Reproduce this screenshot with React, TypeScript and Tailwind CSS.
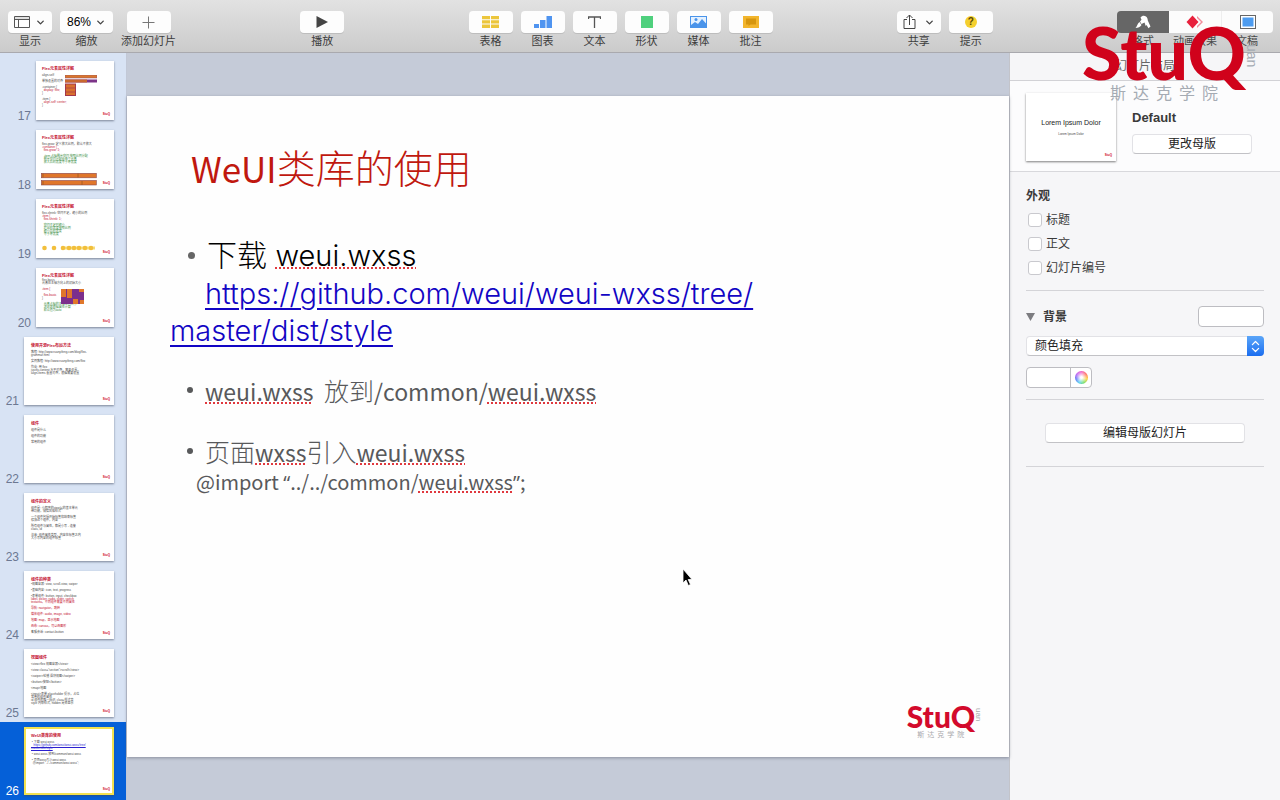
import React from "react";
import { ChevronDown, ChevronsUpDown } from "lucide-react";

type Line = { text: string; tone?: string; gap?: boolean };
type Thumb = { id: number; title: string; nested?: boolean; lines: Line[]; art?: "bars" | "wide" | "dots" | "blocks" };

const RED = "text-[#c41230]";
const GREEN = "text-[#3c8f45]";
const BLUE = "text-[#2a1fd0] underline";

const thumbs: Thumb[] = [
  {
    id: 17,
    title: "Flex元素属性详解",
    nested: true,
    art: "bars",
    lines: [
      { text: "align-self", gap: true },
      { text: "单独设置的对齐", gap: true },
      { text: ".container {", gap: true },
      { text: "  display: flex;", tone: RED },
      { text: "}" },
      { text: ".item {", gap: true },
      { text: "  align-self: center;", tone: RED },
      { text: "}" },
    ],
  },
  {
    id: 18,
    title: "Flex元素属性详解",
    nested: true,
    art: "wide",
    lines: [
      { text: "flex-grow: 定义放大比例，默认不放大", gap: true },
      { text: ".container {", tone: RED },
      { text: "  flex-grow: 1;", tone: RED },
      { text: "  .item 占据剩余空间 按照比例分配", tone: GREEN, gap: true },
      { text: "  剩余空间分配给每个元素", tone: GREEN },
      { text: "  放大后的宽度等于原宽度", tone: GREEN },
    ],
  },
  {
    id: 19,
    title: "Flex元素属性详解",
    nested: true,
    art: "dots",
    lines: [
      { text: "flex-shrink: 空间不足，缩小的比例", gap: true },
      { text: ".item {", tone: RED },
      { text: "  flex-shrink: 1;", tone: RED },
      { text: "  空间不足时缩小", tone: GREEN, gap: true },
      { text: "  超出的宽度按照比例", tone: GREEN },
      { text: "  缩小后的宽度", tone: GREEN },
      { text: "  等于原宽度", tone: GREEN },
    ],
  },
  {
    id: 20,
    title: "Flex元素属性详解",
    nested: true,
    art: "blocks",
    lines: [
      { text: "flex-basis" },
      { text: "元素在主轴方向上的初始大小" },
      { text: ".item {", tone: RED, gap: true },
      { text: "  flex-basis", tone: RED, gap: true },
      { text: "}" },
      { text: "  元素占据的主轴空间大小", tone: GREEN, gap: true },
      { text: "  浏览器根据属性计算", tone: GREEN },
      { text: "  默认值为auto", tone: GREEN },
    ],
  },
  {
    id: 21,
    title: "使用开源Flex布局方法",
    lines: [
      { text: "教程: http://www.ruanyifeng.com/blog/flex-", gap: true },
      { text: "grammar.html" },
      { text: "实例教程: http://www.ruanyifeng.com/flex", gap: true },
      { text: "作业: 用 flex", gap: true },
      { text: "justify-content 水平对齐，需要设置" },
      { text: "align-items 垂直对齐，根据需要设置" },
    ],
  },
  {
    id: 22,
    title: "组件",
    lines: [
      { text: "组件是什么", gap: true },
      { text: "组件的功能", gap: true },
      { text: "常用的组件", gap: true },
    ],
  },
  {
    id: 23,
    title: "组件的定义",
    lines: [
      { text: "组件是: 小程序的view层的基本单元", gap: true },
      { text: "带功能，微信风格样式" },
      { text: "一个组件包括开始标签和结束标签", gap: true },
      { text: "修饰这个组件，内容" },
      { text: "所有组件与属性，都是小写 - 连接", gap: true },
      { text: "class, id" },
      { text: "注意: 组件属性类型，内容在标签之内", gap: true },
      { text: "大小写内容的组件标签" },
    ],
  },
  {
    id: 24,
    title: "组件的种类",
    lines: [
      { text: "•视图容器: view, scroll-view, swiper" },
      { text: "•基础内容: icon, text, progress", gap: true },
      { text: "•表单组件: button, input, checkbox", gap: true },
      { text: "label, picker, radio, slider, switch", tone: RED },
      { text: "textarea，不同组件需要不同属性", tone: RED },
      { text: "导航: navigator，跳转", tone: RED, gap: true },
      { text: "媒体组件: audio, image, video", tone: RED, gap: true },
      { text: "地图: map，显示地图", tone: RED, gap: true },
      { text: "画布: canvas，可以画图形", tone: RED, gap: true },
      { text: "客服会话: contact-button", gap: true },
    ],
  },
  {
    id: 25,
    title: "视图组件",
    lines: [
      { text: "<view>flex 视图容器</view>", gap: true },
      { text: "<view class=\"section\">scroll</view>", gap: true },
      { text: "<swiper>轮播 滑块视图</swiper>", gap: true },
      { text: "<button>按钮</button>", gap: true },
      { text: "<map>地图", gap: true },
      { text: "<input>表单 placeholder 提示，占位", gap: true },
      { text: "常用的组件属性" },
      { text: "id 组件的唯一标识, class 样式类" },
      { text: "style 内联样式, hidden 是否显示" },
    ],
  },
  {
    id: 26,
    title: "WeUI类库的使用",
    lines: [
      { text: " • 下载 weui.wxss", gap: true },
      { text: "   https://github.com/weui/weui-wxss/tree/", tone: BLUE },
      { text: "master/dist/style", tone: BLUE },
      { text: " • weui.wxss 放到/common/weui.wxss", gap: true },
      { text: " • 页面wxss引入weui.wxss", gap: true },
      { text: "  @import “../../common/weui.wxss”;" },
    ],
  },
];

function ThumbArt({ kind }: { kind: Thumb["art"] }) {
  if (kind === "bars") {
    return (
      <svg className="absolute left-[29px] top-3.5" width="32" height="22" viewBox="0 0 32 22">
        <rect width="32" height="3" fill="#d9772b" stroke="#8a4a78" strokeWidth=".5" />
        <rect y="4.500" width="32" height="3" fill="#7c3488" />
        <rect y="4.500" width="22" height="3" fill="#c9682f" />
        <rect y="9" x=".5" width="10" height="11.500" fill="#d9702d" stroke="#a4384c" />
        <path d="M.5 13h10M.5 17h10" stroke="#a4384c" strokeWidth=".7" />
      </svg>
    );
  }
  if (kind === "wide") {
    return (
      <svg className="absolute left-[5px] top-[43px]" width="56" height="13" viewBox="0 0 56 13">
        <rect x=".3" y=".3" width="55" height="4.500" fill="#e0762a" stroke="#8a4a50" strokeWidth=".6" />
        <rect x=".3" y="7.500" width="55" height="4.500" fill="#e0762a" stroke="#8a4a50" strokeWidth=".6" />
        <path d="M2 .5v4M37 .5v4M2 8v4M41 8v4" stroke="#a05c20" strokeWidth=".8" />
      </svg>
    );
  }
  if (kind === "dots") {
    return (
      <svg className="absolute left-1.5 top-[46px]" width="54" height="6" viewBox="0 0 54 6">
        <path d="M20 3h33" stroke="#f7dc7a" strokeWidth="3" />
        {[2.5, 12, 21, 27, 32, 37, 43, 49].map((x) => (
          <circle key={x} cx={x} cy="3" r="2.300" fill="#f2bf3c" />
        ))}
      </svg>
    );
  }
  if (kind === "blocks") {
    return (
      <svg className="absolute left-[25px] top-[21px]" width="23" height="15" viewBox="0 0 23 15">
        <rect width="23" height="15" fill="#7c2f8c" />
        <path d="M0 0h5v8H0zM6 0h5v9H6zM12 10h5v5h-5zM18 0h5v3h-5zM19 11h4v4h-4z" fill="#e0772b" />
      </svg>
    );
  }
  return null;
}

function SlideThumb({ thumb, selected }: { thumb: Thumb; selected?: boolean }) {
  const size = thumb.nested ? "h-[59px] w-[78px] px-1.5 pt-[5px]" : "h-[68px] w-[90px] px-[7px] pt-1.5";
  const ring = selected ? "ring-2 ring-inset ring-[#f3e14f]" : "";
  return (
    <li
      className={`flex shrink-0 items-end justify-end gap-[5px] py-[5px] pr-3 ${selected ? "bg-[#0560d8] text-white" : "text-[#6c7892]"}`}
    >
      <span className="text-[12px] leading-2">{thumb.id}</span>
      <div className={`relative overflow-hidden bg-white shadow-[0_1px_2px_rgba(60,70,90,0.6)] ${size} ${ring}`}>
        <p className="mb-px whitespace-nowrap text-[4px] font-bold leading-[5px] text-[#c41230]">{thumb.title}</p>
        {thumb.lines.map((line, i) => (
          <p
            key={i}
            className={`whitespace-pre text-[3px] leading-[3px] ${line.gap ? "mt-[3px]" : ""} ${line.tone ?? "text-[#4a4a4a]"}`}
          >
            {line.text}
          </p>
        ))}
        <ThumbArt kind={thumb.art} />
        <span className="absolute bottom-1 right-1 text-[3px] font-black leading-[3px] text-[#d0021b]">StuQ</span>
      </div>
    </li>
  );
}

function ToolButton({ label, wide, children }: { label: string; wide?: boolean; children: React.ReactNode }) {
  return (
    <button type="button" className="flex flex-col items-center gap-0.5 text-[11px] leading-3 text-[#3d3d3d]">
      <span
        className={`flex h-[22px] items-center justify-center gap-1 rounded bg-[#fdfdfd] shadow-[0_1px_0_#bdbdbd] ${wide ? "w-[53px]" : "w-11"}`}
      >
        {children}
      </span>
      <span className="whitespace-nowrap">{label}</span>
    </button>
  );
}

function Toolbar() {
  return (
    <header className="flex h-[53px] shrink-0 items-start justify-between border-b border-[#a9a9ae] bg-linear-to-b from-[#e2e2e2] to-[#cbcbcb] pl-2 pr-[7px] pt-[11px]">
      <div className="flex gap-2">
        <ToolButton label="显示">
          <svg width="17" height="13" viewBox="0 0 17 13" fill="none" stroke="#555">
            <path d="M.5.5h15v11H.5zM.5 3.500h15M4.500 3.500v8" />
            <path d="M1 2h14" stroke="#c4c4c4" />
          </svg>
          <ChevronDown size={11} strokeWidth={3} color="#444" />
        </ToolButton>
        <ToolButton label="缩放" wide>
          <span className="text-[12px] text-black">86%</span>
          <ChevronDown size={11} strokeWidth={3} color="#444" />
        </ToolButton>
        <ToolButton label="添加幻灯片">
          <svg width="13" height="13" viewBox="0 0 13 13" stroke="#777">
            <path d="M6.500.5v12M.5 6.500h12" />
          </svg>
        </ToolButton>
      </div>

      <ToolButton label="播放">
        <svg width="12" height="12" viewBox="0 0 12 12" fill="#444">
          <path d="M.5 0 12 6 .5 12z" />
        </svg>
      </ToolButton>

      <div className="flex gap-2">
        <ToolButton label="表格">
          <svg width="17" height="12" viewBox="0 0 17 12" fill="#ecc63c">
            <path d="M0 0h8v3.300H0zM9 0h8v3.300H9zM0 4.300h8v3.300H0zM9 4.300h8v3.300H9zM0 8.600h8V12H0zM9 8.600h8V12H9z" />
          </svg>
        </ToolButton>
        <ToolButton label="图表">
          <svg width="18" height="12" viewBox="0 0 18 12" fill="#4f94f0">
            <path d="M0 8h5v4H0zM6 4h5.500v8H6zM12.500 0H18v12h-5.500z" />
          </svg>
        </ToolButton>
        <ToolButton label="文本">
          <svg width="13" height="13" viewBox="0 0 13 13" fill="none" stroke="#555">
            <path d="M.5 3V1h12v2M6.500 1v11" strokeWidth="1.300" />
          </svg>
        </ToolButton>
        <ToolButton label="形状">
          <span className="size-3 bg-[#4fd07d]" />
        </ToolButton>
        <ToolButton label="媒体">
          <svg width="17" height="12" viewBox="0 0 17 12">
            <rect x=".5" y=".5" width="16" height="11" fill="#e4f1ff" stroke="#4a94ea" />
            <path d="M1 9l4-3 3 2 4-5 4.500 5v4H1z" fill="#4a94ea" />
            <circle cx="6" cy="3.500" r="1.500" fill="#4a94ea" />
          </svg>
        </ToolButton>
        <ToolButton label="批注">
          <svg width="16" height="12" viewBox="0 0 16 12">
            <rect width="16" height="12" fill="#f2b52c" />
            <path d="M3 2.500h10v6H7.500L5.500 10V8.500H3z" fill="#d6960f" />
          </svg>
        </ToolButton>
      </div>

      <div className="flex gap-2">
        <ToolButton label="共享">
          <svg width="13" height="16" viewBox="0 0 13 16" fill="none" stroke="#444">
            <path d="M4 5.500H1v9h11v-9H9M6.500 11V1M3.500 4l3-3 3 3" />
          </svg>
          <ChevronDown className="ml-1" size={11} strokeWidth={3} color="#444" />
        </ToolButton>
        <ToolButton label="提示">
          <span className="size-3 rounded-full bg-[#f4cf2e] text-center text-[10px] font-bold leading-3 text-[#5a4708]">?</span>
        </ToolButton>
      </div>

      <div className="flex text-[11px] leading-3 text-[#4a4a4a]">
        <button type="button" className="flex w-[52px] flex-col items-center gap-0.5">
          <span className="flex h-[22px] w-full items-center justify-center rounded-l bg-[#666]">
            <svg width="16" height="14" viewBox="0 0 16 14" fill="#fff">
              <path d="M5.500 2.500C7 .8 9 .2 11 1.500c1.300.9 1.700 2.200 1.800 4l2.700 6-2 1.800L11.500 10l-.8 1-1.200-3.500-3 1.500L5 6.500l1.500-1.700z" />
              <path d="M4.500 7l2 3C5.500 12 3 13 .5 13 2 11.500 2.500 8.500 4.500 7z" />
            </svg>
          </span>
          格式
        </button>
        <button type="button" className="flex w-[52px] flex-col items-center gap-0.5">
          <span className="flex h-[22px] w-full items-center justify-center bg-[#fcfcfc]">
            <svg width="18" height="14" viewBox="0 0 18 14">
              <path d="M11 1l6 6-6 6z" fill="#f08d9c" />
              <path d="M9 1l6 6-6 6" fill="#fff" />
              <path d="M6.500.5l6 6.500-6 6.500L.5 7z" fill="#e8203c" />
            </svg>
          </span>
          动画效果
        </button>
        <button type="button" className="flex w-[52px] flex-col items-center gap-0.5">
          <span className="flex h-[22px] w-full items-center justify-center rounded-r border-l border-[#eee] bg-[#fcfcfc]">
            <svg width="16" height="14" viewBox="0 0 16 14">
              <rect x=".5" y=".5" width="15" height="13" fill="#fff" stroke="#666" />
              <rect x="2.500" y="2.500" width="11" height="9" fill="#4d9cf0" />
            </svg>
          </span>
          文稿
        </button>
      </div>
    </header>
  );
}

function Spell({ children }: { children: React.ReactNode }) {
  return (
    <span className="underline decoration-[#e0383e] decoration-dotted decoration-2 underline-offset-2">{children}</span>
  );
}

function Latin({ children }: { children: React.ReactNode }) {
  return <span className="text-[23px] font-normal">{children}</span>;
}

function Slide() {
  return (
    <article className="relative aspect-[4/3] w-full bg-[#fefefe] shadow-[0_1px_3px_rgba(80,85,100,0.5)]">
      <h1 className="ml-16 pt-11 font-['Noto_Sans_CJK_SC'] text-[39px] font-light leading-[52px] text-[#c0180f]">
        <span className="text-[35px] font-normal">WeUI</span>类库的使用
      </h1>

      <ul className="mt-[42px] pl-[61px] font-['Inter','Noto_Sans_CJK_SC',sans-serif] font-light text-[#58595b]">
        <li className="flex items-center gap-3">
          <span className="size-[7px] rounded-full bg-[#666]" />
          <span className="text-[30px] leading-[38px] text-black">
            下载{" "}
            <span className="text-[29px]">
              <Spell>weui.wxss</Spell>
            </span>
          </span>
        </li>
      </ul>
      <a
        href="https://github.com/weui/weui-wxss/tree/master/dist/style"
        className="ml-[43px] block indent-[35px] font-['Inter'] text-[29px] font-light leading-[37px] text-[#1205c4] underline decoration-2 underline-offset-4"
      >
        https://github.com/weui/weui-wxss/tree/
        <br />
        master/dist/style
      </a>

      <ul className="mt-[23px] pl-[60px] font-['Noto_Sans_CJK_SC'] text-[25px] font-light leading-9 text-[#58595b]">
        <li className="flex items-center gap-3">
          <span className="size-1.5 rounded-full bg-[#58595b]" />
          <span>
            <Latin>
              <Spell>weui.wxss</Spell>&nbsp;{" "}
            </Latin>
            放到
            <Latin>
              /common/<Spell>weui.wxss</Spell>
            </Latin>
          </span>
        </li>
        <li className="mt-6 flex items-center gap-3">
          <span className="size-1.5 rounded-full bg-[#58595b]" />
          <span>
            页面
            <Latin>
              <Spell>wxss</Spell>
            </Latin>
            引入
            <Latin>
              <Spell>weui.wxss</Spell>
            </Latin>
          </span>
        </li>
      </ul>
      <p className="ml-[69px] font-['Noto_Sans_CJK_SC'] text-[20px] leading-6 text-[#58595b]">
        @import <span className="font-['Open_Sans']">“</span>../../common/<Spell>weui.wxss</Spell>
        <span className="font-['Open_Sans']">”</span>;
      </p>

      {/* brand mark in the slide corner */}
      <div className="absolute bottom-[19px] right-7 flex items-start">
        <div className="flex flex-col items-center">
          <span className="font-['Lato'] text-[30px] font-black leading-[28px] text-[#d30a2c]">StuQ</span>
          <span className="flex gap-[3px] font-['Noto_Sans_CJK_SC'] text-[7px] leading-2 text-[#a9a9ad]">
            {Array.from("斯达克学院").map((c) => (
              <span key={c}>{c}</span>
            ))}
          </span>
        </div>
        <span className="mt-1.5 text-[8px] leading-1.5 text-[#a9a9ad] [writing-mode:vertical-rl]">uan</span>
      </div>
    </article>
  );
}

function Inspector() {
  return (
    <aside className="w-[271px] shrink-0 border-l border-[#c3c4ca] bg-[#f6f6f8] text-[12px] leading-4 text-[#3a3a3a]">
      <h2 className="border-b border-[#d2d2d6] py-[5px] text-center leading-[17px] text-[#666]">幻灯片布局</h2>

      <section className="flex gap-4 border-b border-[#d8d8dc] bg-[#fcfcfd] pb-2.5 pl-4 pt-3">
        <div className="relative flex h-[68px] w-[90px] flex-col items-center justify-center bg-white shadow-[0_1px_2px_rgba(0,0,0,0.5)]">
          <span className="whitespace-nowrap text-[7px] leading-[10px] text-[#222]">Lorem Ipsum Dolor</span>
          <span className="mt-1 text-[3px] leading-1 text-[#444]">Lorem Ipsum Dolor</span>
          <span className="absolute bottom-1 right-1 text-[3px] font-black leading-[3px] text-[#d0021b]">StuQ</span>
        </div>
        <div className="flex flex-col gap-2 pt-4">
          <strong className="text-[13px] leading-[17px]">Default</strong>
          <button
            type="button"
            className="h-5 w-[120px] rounded border border-[#e2e2e6] border-b-[#c2c2c6] bg-white text-[12px] leading-4 text-[#222]"
          >
            更改母版
          </button>
        </div>
      </section>

      <div className="px-4">
        <section className="border-b border-[#d4d4d8] pb-3.5 pt-4">
          <h3 className="mb-2 font-bold">外观</h3>
          {["标题", "正文", "幻灯片编号"].map((name) => (
            <label key={name} className="mb-2 flex items-center gap-1 pl-0.5 last:mb-0">
              <input type="checkbox" className="size-3.5 appearance-none rounded-[3px] border border-[#c9c9ce] bg-white" />
              {name}
            </label>
          ))}
        </section>

        <section className="border-b border-[#d4d4d8] pb-[11px] pt-[15px]">
          <div className="flex items-center">
            <svg width="9" height="8" viewBox="0 0 9 8" fill="#7c7c80">
              <path d="M0 0h9L4.500 8z" />
            </svg>
            <h3 className="ml-2 flex-1 font-bold">背景</h3>
            <button type="button" aria-label="背景" className="h-[21px] w-[66px] rounded border border-[#bdbdc2] bg-white" />
          </div>
          <div className="relative mt-[9px]">
            <select
              aria-label="填充"
              className="block h-5 w-full appearance-none rounded border border-[#e2e2e6] border-b-[#c2c2c6] bg-white px-2 text-[12px] leading-4 text-[#222]"
            >
              <option>颜色填充</option>
            </select>
            <span className="pointer-events-none absolute inset-y-0 right-0 flex w-[17px] items-center justify-center rounded-r bg-linear-to-b from-[#5aa5f8] to-[#1a6df0]">
              <ChevronsUpDown size={15} color="#fff" />
            </span>
          </div>
          <div className="mt-[11px] flex h-[21px] w-[66px] overflow-hidden rounded border border-[#bdbdc2] bg-white">
            <button type="button" aria-label="颜色" className="flex-1 border-r border-[#bdbdc2]" />
            <button type="button" aria-label="色轮" className="flex w-5 items-center justify-center">
              <span className="size-[13px] rounded-full bg-[radial-gradient(circle,#fff_10%,transparent_75%),conic-gradient(#f050c0,#ff5a4a,#ffc81d,#5fdb4b,#3fc8f0,#4d5df5,#b64df0,#f050c0)]" />
            </button>
          </div>
        </section>

        <section className="border-b border-[#d4d4d8] pb-[23px] pt-[23px] text-center">
          <button
            type="button"
            className="h-5 w-[200px] rounded border border-[#e2e2e6] border-b-[#c2c2c6] bg-white leading-4 text-[#222]"
          >
            编辑母版幻灯片
          </button>
        </section>
      </div>
    </aside>
  );
}

export default function App() {
  return (
    <div className="relative flex h-screen flex-col overflow-hidden font-['Liberation_Sans','Noto_Sans_CJK_SC',sans-serif]">
      <Toolbar />

      <div className="flex min-h-0 flex-1">
        <nav className="w-[127px] shrink-0 overflow-hidden border-r border-[#c2c8d6] bg-[#d8e3f4]">
          <ul className="flex flex-col pt-[3px]">
            {thumbs.map((t) => (
              <SlideThumb key={t.id} thumb={t} selected={t.id === 26} />
            ))}
          </ul>
        </nav>

        <main className="flex min-w-0 flex-1 items-center bg-[#c5cbd8]">
          <Slide />
        </main>

        <Inspector />
      </div>

      {/* watermark */}
      <div className="pointer-events-none absolute right-[22px] top-5 flex items-start">
        <div className="flex flex-col items-center">
          <span className="font-['Lato'] text-[72px] font-black leading-[64px] text-[#d0021b]">StuQ</span>
          <span className="flex gap-[7px] font-['Noto_Sans_CJK_SC'] text-[16px] leading-4 text-[#a5abb3]">
            {Array.from("斯达克学院").map((c) => (
              <span key={c}>{c}</span>
            ))}
          </span>
        </div>
        <span className="mt-6 text-[14px] leading-3 text-[#a5abb3] [writing-mode:vertical-rl]">uan</span>
      </div>

      <svg className="pointer-events-none absolute left-[682px] top-[568px]" width="11" height="19" viewBox="0 0 11 19">
        <path d="M1 1v14l3-3 2.300 5.500 2.200-1L6.200 11.500H10z" fill="#000" stroke="#fff" strokeWidth=".8" />
      </svg>
    </div>
  );
}
